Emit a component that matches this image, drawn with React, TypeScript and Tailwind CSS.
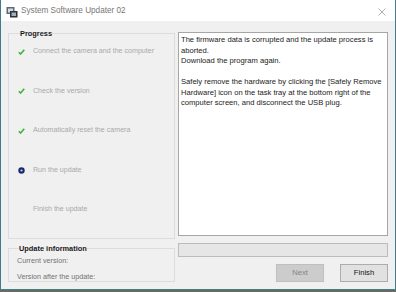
import React from "react";

const Check = () => (
  <svg width="7" height="6" viewBox="0 0 7 6" className="shrink-0">
    <path d="M0.8 3.2 L2.6 5 L6.3 0.8" stroke="#3cb43c" strokeWidth="1.6" fill="none" />
  </svg>
);

const Dot = () => (
  <svg width="7" height="7" viewBox="0 0 7 7" className="shrink-0">
    <circle cx="3.5" cy="3.5" r="3.2" fill="#1b2a6b" />
    <circle cx="3.5" cy="3.5" r="1.1" fill="#c8d0f0" />
  </svg>
);

const steps: { label: string; icon: "check" | "dot" | "none" }[] = [
  { label: "Connect the camera and the computer", icon: "check" },
  { label: "Check the version", icon: "check" },
  { label: "Automatically reset the camera", icon: "check" },
  { label: "Run the update", icon: "dot" },
  { label: "Finish the update", icon: "none" },
];

export default function App() {
  return (
    <div
      className="w-[396px] h-[292px] bg-[#6b6a5e] overflow-hidden"
      style={{ fontFamily: '"Liberation Sans", Arial, sans-serif' }}
    >
      <div className="h-[290px] flex flex-col border-x border-b border-[#3e7e8c] bg-[#f0f0f0]">
        {/* title bar */}
        <div className="h-[21px] bg-white flex items-center shrink-0 pt-[2px]">
          <svg width="12" height="12" viewBox="0 0 12 12" className="ml-[5px] mr-[3px]">
            <rect x="0.5" y="1" width="8" height="7" fill="#5b6b73" />
            <rect x="2" y="2.5" width="5" height="4" fill="#d5dde2" />
            <rect x="4" y="5" width="7.5" height="6.5" fill="#2a3338" />
            <rect x="5.5" y="6.5" width="4.5" height="3.5" fill="#9fb0b8" />
          </svg>
          <span className="text-[8.2px] text-[#777]">System Software Updater 02</span>
          <svg width="8" height="8" viewBox="0 0 8 8" className="ml-auto mr-[9px]">
            <path d="M0.5 0.5 L7.5 7.5 M7.5 0.5 L0.5 7.5" stroke="#9a9a9a" strokeWidth="0.8" />
          </svg>
        </div>

        <div className="flex flex-1 pl-[7px] pr-[7px] pt-[8px] gap-[3px]">
          {/* left column */}
          <div className="w-[167px] flex flex-col">
            <fieldset className="border border-[#dcdcdc] h-[210px] px-[9px] pt-[9px] mx-0">
              <legend className="text-[7.4px] font-bold text-[#1a1a1a] ml-[2px] px-0 leading-[9px]">
                Progress
              </legend>
              <div className="flex flex-col gap-[30.5px]">
                {steps.map((s) => (
                  <div key={s.label} className="flex items-center h-[9px]">
                    <div className="w-[15px] flex items-center">
                      {s.icon === "check" && <Check />}
                      {s.icon === "dot" && <Dot />}
                    </div>
                    <span className="text-[7.1px] text-[#a9a9a9] leading-[9px]">{s.label}</span>
                  </div>
                ))}
              </div>
            </fieldset>
            <fieldset className="border border-[#dcdcdc] mt-[5px] h-[38px] px-[8px] mx-0">
              <legend className="text-[7.4px] font-bold text-[#1a1a1a] ml-[2px] px-0 leading-[9px]">
                Update information
              </legend>
              <div className="flex flex-col gap-[7px] pt-[3px] text-[7.2px] text-[#707070] leading-[9px]">
                <span>Current version:</span>
                <span>Version after the update:</span>
              </div>
            </fieldset>
          </div>

          {/* right column */}
          <div className="flex-1 flex flex-col pt-[3px]">
            <div className="h-[204px] bg-white border border-[#a6a6a6] px-[2px] pt-[2px] text-[7.6px] leading-[10.5px] text-[#1a1a1a]">
              <p>The firmware data is corrupted and the update process is aborted.</p>
              <p>Download the program again.</p>
              <p className="mt-[10.5px]">
                Safely remove the hardware by clicking the [Safely Remove Hardware] icon on the task tray at the bottom right of the computer screen, and disconnect the USB plug.
              </p>
            </div>
            <div className="mt-[7px] h-[14px] bg-[#e6e6e6] border border-[#bcbcbc]" />
            <div className="flex justify-end gap-[16px] mt-[7px]">
              <button className="w-[48px] h-[18px] bg-[#cccccc] border border-[#bfbfbf] text-[7.6px] text-[#838383]">
                Next
              </button>
              <button className="w-[48px] h-[18px] bg-[#e1e1e1] border border-[#adadad] text-[7.6px] text-[#111]">
                Finish
              </button>
            </div>
          </div>
        </div>
      </div>
    </div>
  );
}
